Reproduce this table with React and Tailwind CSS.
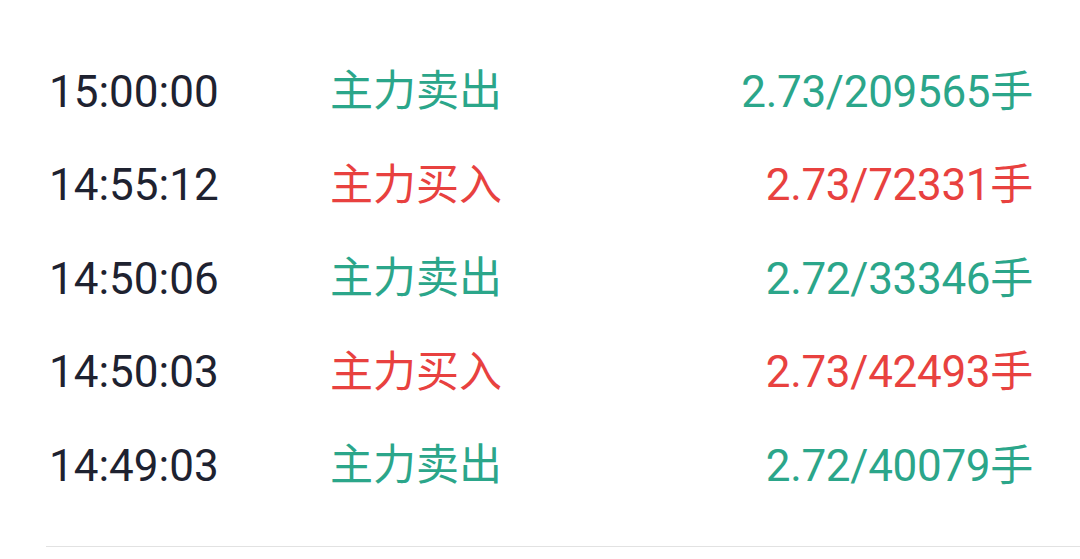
const trades = [
  { time: "15:00:00", type: "主力卖出", value: "2.73/209565", side: "sell" },
  { time: "14:55:12", type: "主力买入", value: "2.73/72331", side: "buy" },
  { time: "14:50:06", type: "主力卖出", value: "2.72/33346", side: "sell" },
  { time: "14:50:03", type: "主力买入", value: "2.73/42493", side: "buy" },
  { time: "14:49:03", type: "主力卖出", value: "2.72/40079", side: "sell" },
];

export default function App() {
  return (
    <div
      className="w-[1080px] h-[559px] bg-white overflow-hidden pt-[45px]"
      style={{ fontFamily: 'Roboto, "Noto Sans CJK SC", sans-serif' }}
    >
      {trades.map((t, i) => (
        <div key={i} className="flex items-center h-[93.5px] text-[44px] leading-none">
          <div className="w-[330px] pl-[49px] text-[#1e2230]">{t.time}</div>
          <div
            className={`w-[300px] text-[43px] ${t.side === "sell" ? "text-[#2ba68a]" : "text-[#e8413f]"}`}
          >
            {t.type}
          </div>
          <div
            className={`w-[403px] text-right tracking-[-0.3px] ${t.side === "sell" ? "text-[#2ba68a]" : "text-[#e8413f]"}`}
          >
            {t.value}
            <span className="text-[43px]">手</span>
          </div>
        </div>
      ))}
      <div className="mt-[33px] ml-[46px] h-px bg-[#e2e2e2]" />
    </div>
  );
}
